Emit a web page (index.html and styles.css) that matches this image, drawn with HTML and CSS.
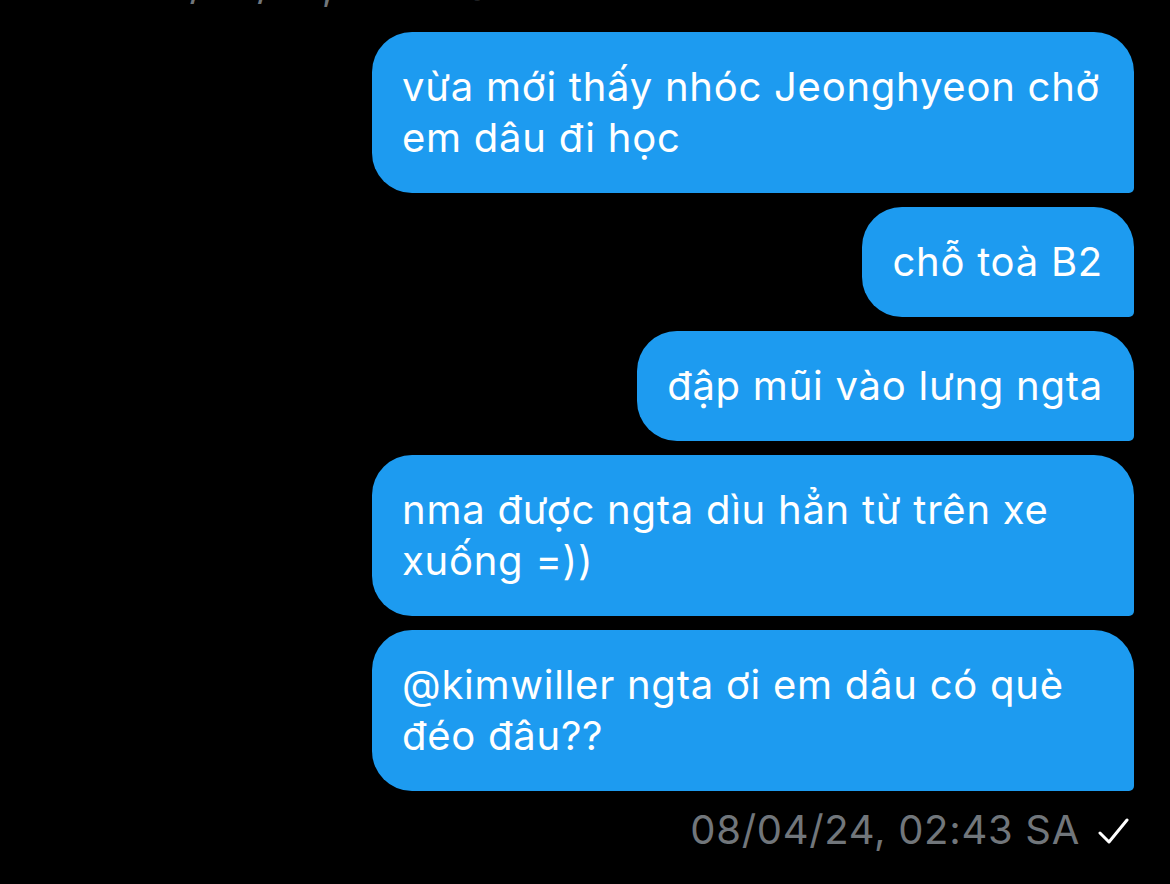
FILE: index.html
```html
<!DOCTYPE html>
<html lang="vi">
<head>
<meta charset="utf-8">
<link rel="stylesheet" href="styles.css">
</head>
<body>
<div class="chat">
  <div class="prev-meta">08/04/24, 02:41 SA</div>
  <div class="bubble">vừa mới thấy nhóc Jeonghyeon chở em dâu đi học</div>
  <div class="bubble">chỗ toà B2</div>
  <div class="bubble">đập mũi vào lưng ngta</div>
  <div class="bubble">nma được ngta dìu hẳn từ trên xe xuống =))</div>
  <div class="bubble">@kimwiller ngta ơi em dâu có què đéo đâu??</div>
  <div class="meta">
    <span class="time">08/04/24, 02:43 SA</span>
    <svg class="check" width="32" height="28" viewBox="0 0 32 28"><polyline points="2,16 11,25 29,3" fill="none" stroke="#fff" stroke-width="3" stroke-linecap="round" stroke-linejoin="round"/></svg>
  </div>
</div>
</body>
</html>
```
FILE: styles.css
```css
html, body {
  margin: 0;
  padding: 0;
  background: #000;
  height: 100%;
  overflow: hidden;
}
.chat {
  display: flex;
  flex-direction: column;
  align-items: flex-end;
  gap: 14px;
  padding: 0 36px 0 0;
  font-family: Inter, "Noto Sans", sans-serif;
  letter-spacing: 0.75px;
}
.prev-meta {
  align-self: flex-start;
  margin-left: 138px;
  margin-top: -40px;
  margin-bottom: 7px;
  color: #71767b;
  font-size: 40px;
  line-height: 51px;
  letter-spacing: 0.7px;
}
.bubble {
  max-width: 701px;
  background: #1d9bf0;
  color: #fff;
  font-size: 40px;
  line-height: 51px;
  padding: 28.5px 31px 30.5px 30px;
  border-radius: 40px 40px 5px 40px;
}
.meta {
  display: flex;
  align-items: center;
  gap: 18px;
  margin-top: 3px;
  margin-right: 4px;
}
.time {
  color: #71767b;
  font-size: 40px;
  line-height: 44px;
  letter-spacing: 0.7px;
}
.check {
  display: block;
  margin-top: 2px;
}
```
